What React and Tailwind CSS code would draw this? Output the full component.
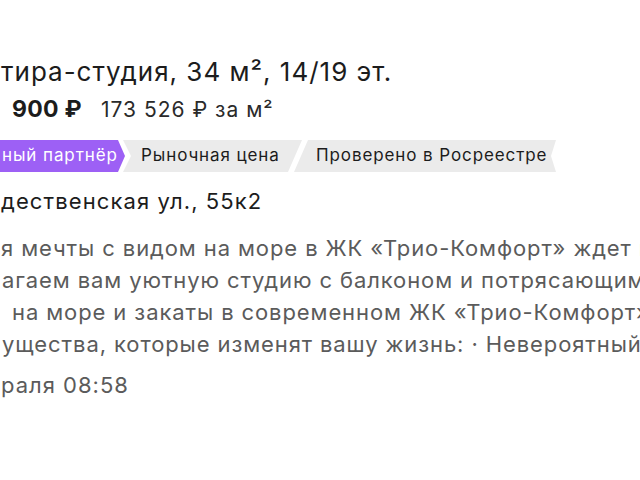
export default function App() {
  return (
    <div className="w-[640px] h-[480px] overflow-hidden bg-white font-['Inter',sans-serif] text-[#1c1c1c]">
      <div className="pt-[58px] flex flex-col">
        <div className="text-[26px] leading-[28px] tracking-[1px] whitespace-nowrap pl-[1px]">тира-студия, 34 м², 14/19 эт.</div>
        <div className="mt-[9px] h-[28px] flex items-baseline gap-[19px] whitespace-nowrap pl-[12px]">
          <span className="text-[23px] font-bold leading-[28px] tracking-[0.3px]">900 ₽</span>
          <span className="text-[21px] leading-[28px] tracking-[1px] text-[#2a2a2a]">173 526 ₽ за м²</span>
        </div>
        <div className="mt-[17px] h-[32px] flex items-stretch text-[17px] tracking-[0.9px] whitespace-nowrap">
          <div className="w-[125px] bg-[#9d60f5] text-white flex items-center pl-[2px] [clip-path:polygon(0_0,calc(100%-7px)_0,100%_50%,calc(100%-7px)_100%,0_100%)]">ный партнёр</div>
          <div className="-ml-[2px] w-[179px] bg-[#ebebeb] flex items-center pl-[18px] [clip-path:polygon(0_0,100%_0,calc(100%-14px)_100%,0_100%,8px_50%)]">Рыночная цена</div>
          <div className="-ml-[8px] w-[262px] bg-[#ebebeb] flex items-center pl-[22px] [clip-path:polygon(14px_0,100%_0,calc(100%-5px)_50%,100%_100%,0_100%)]">Проверено в Росреестре</div>
        </div>
        <div className="mt-[15px] text-[22px] leading-[28px] tracking-[1.1px] whitespace-nowrap pl-[1px]">дественская ул., 55к2</div>
        <div className="mt-[17px] text-[22px] leading-[32px] tracking-[0.9px] text-[#5b5b5b] whitespace-nowrap">
          <div className="pl-[1px]">я мечты с видом на море в ЖК «Трио-Комфорт» ждет вас!</div>
          <div className="pl-[2px]">агаем вам уютную студию с балконом и потрясающим видом</div>
          <div className="pl-[12px]">на море и закаты в современном ЖК «Трио-Комфорт»</div>
          <div className="pl-[2px]">ущества, которые изменят вашу жизнь: · Невероятный вид</div>
        </div>
        <div className="mt-[11px] text-[22px] leading-[28px] tracking-[1px] text-[#5b5b5b] whitespace-nowrap pl-[1px]">раля 08:58</div>
      </div>
    </div>
  );
}
